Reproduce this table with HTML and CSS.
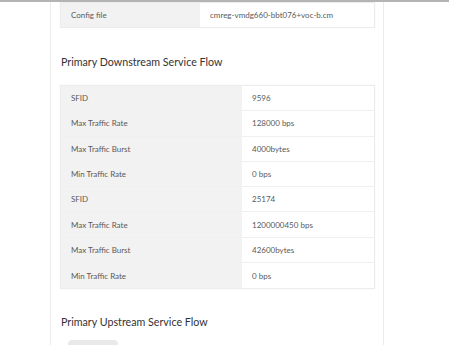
FILE: index.html
```html
<!DOCTYPE html>
<html>
<head>
<meta charset="utf-8">
<link rel="stylesheet" href="styles.css">
</head>
<body>
<div class="topline"></div>
<div class="card">
  <div class="table config">
    <div class="row"><div class="label">Config file</div><div class="value">cmreg-vmdg660-bbt076+voc-b.cm</div></div>
  </div>
  <h2 class="heading">Primary Downstream Service Flow</h2>
  <div class="table">
    <div class="row"><div class="label">SFID</div><div class="value">9596</div></div>
    <div class="row"><div class="label">Max Traffic Rate</div><div class="value">128000 bps</div></div>
    <div class="row"><div class="label">Max Traffic Burst</div><div class="value">4000bytes</div></div>
    <div class="row"><div class="label">Min Traffic Rate</div><div class="value">0 bps</div></div>
    <div class="row"><div class="label">SFID</div><div class="value">25174</div></div>
    <div class="row"><div class="label">Max Traffic Rate</div><div class="value">1200000450 bps</div></div>
    <div class="row"><div class="label">Max Traffic Burst</div><div class="value">42600bytes</div></div>
    <div class="row"><div class="label">Min Traffic Rate</div><div class="value">0 bps</div></div>
  </div>
  <h2 class="heading up">Primary Upstream Service Flow</h2>
  <div class="tab"></div>
</div>
</body>
</html>
```
FILE: styles.css
```css
html, body {
  margin: 0;
  padding: 0;
  background: #fff;
  font-family: "Lato", "Liberation Sans", sans-serif;
  overflow: hidden;
  height: 345px;
}
.topline {
  height: 2px;
  background: #b4b4b4;
}
.card {
  box-sizing: border-box;
  margin-left: 50px;
  width: 334px;
  border-left: 1px solid #ececec;
  border-right: 1px solid #ececec;
  padding: 1px 9px 20px 10px;
  height: 343px;
  overflow: hidden;
}
.table {
  box-shadow: 0 0 1px 1px #ececec;
}
.row {
  display: grid;
  grid-template-columns: 181px 1fr;
  height: 25.3px;
  box-sizing: border-box;
  border-bottom: 1px solid #f0f0f0;
}
.config .row {
  grid-template-columns: 139px 1fr;
  height: 24px;
  border-bottom: none;
}
.row:last-child {
  border-bottom: none;
}
.label {
  background: #f2f2f2;
  color: #5a5a5a;
  font-size: 8px;
  padding-left: 10px;
  display: flex;
  align-items: center;
}
.value {
  background: #fff;
  color: #5a5a5a;
  font-size: 8px;
  padding-left: 10px;
  display: flex;
  align-items: center;
}
.heading {
  margin: 28px 0 17px;
  font-size: 10.7px;
  line-height: 14px;
  font-weight: normal;
  color: #333;
}
.heading.up {
  margin: 27px 0 11px;
}
.tab {
  margin-left: 7px;
  width: 50px;
  height: 20px;
  background: #e9e9e9;
  border-radius: 4px;
}
```
